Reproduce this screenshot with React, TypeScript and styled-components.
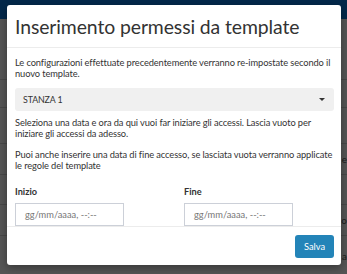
import React from 'react';
import styled, { createGlobalStyle } from 'styled-components';

const GlobalStyle = createGlobalStyle`
  html, body {
    margin: 0;
    padding: 0;
    background: #545454;
    font-family: 'Lato', 'Liberation Sans', sans-serif;
  }
`;

const Page = styled.div`
  position: relative;
  width: 347px;
  height: 274px;
  overflow: hidden;
  background: #555555;
`;

const NavBar = styled.div`
  height: 19px;
  background: #03284a;
`;

const BgRow = styled.div<{ $h: number }>`
  height: ${(p) => p.$h}px;
  border-bottom: 1px solid #484848;
  display: flex;
  justify-content: flex-end;
  align-items: center;
  font-size: 10px;
  color: #1c1c1c;
`;

const Modal = styled.div`
  position: absolute;
  left: 7px;
  top: 5px;
  width: 334px;
  height: 260px;
  background: #ffffff;
  border-radius: 3px;
  box-shadow: 0 3px 9px rgba(0, 0, 0, 0.35);
  display: flex;
  flex-direction: column;
  color: #333333;
`;

const Header = styled.div`
  height: 43px;
  box-sizing: border-box;
  padding: 0 8px;
  display: flex;
  align-items: center;
  border-bottom: 1px solid #ececec;
`;

const Title = styled.h4`
  margin: 0;
  font-size: 19.4px;
  font-weight: 400;
  color: #333333;
  letter-spacing: -0.1px;
`;

const Body = styled.div`
  flex: 1;
  padding: 9px 7px 0 8px;
  display: flex;
  flex-direction: column;
`;

const Text = styled.p<{ $mt?: number }>`
  margin: ${(p) => p.$mt ?? 0}px 0 0;
  font-size: 9.3px;
  letter-spacing: -0.1px;
  line-height: 11px;
  color: #333333;
`;

const Select = styled.div`
  margin-top: 9px;
  height: 23px;
  border-radius: 3px;
  background: #f0f0f0;
  display: flex;
  align-items: center;
  justify-content: space-between;
  padding: 0 9px 0 8px;
  font-size: 8.8px;
  letter-spacing: -0.1px;
  color: #333333;
`;

const Caret = styled.span`
  width: 0;
  height: 0;
  border-left: 3px solid transparent;
  border-right: 3px solid transparent;
  border-top: 3px solid #333333;
`;

const Fields = styled.div`
  margin-top: 15px;
  display: grid;
  grid-template-columns: 169px 1fr;
`;

const Field = styled.div`
  display: flex;
  flex-direction: column;
`;

const Label = styled.label`
  font-size: 9.2px;
  font-weight: 700;
  color: #333333;
  line-height: 11px;
`;

const DateInput = styled.div`
  margin-top: 6px;
  width: 109px;
  height: 23px;
  box-sizing: border-box;
  border: 1px solid #ccd0d8;
  display: flex;
  align-items: center;
  padding-left: 9px;
  font-size: 9.3px;
  color: #777777;
`;

const Footer = styled.div`
  height: 38px;
  border-top: 1px solid #ececec;
  display: flex;
  justify-content: flex-end;
  align-items: center;
  padding: 0 7px;
`;

const Button = styled.button`
  width: 39px;
  height: 23px;
  border: none;
  border-radius: 3px;
  background: #2384b8;
  color: #ffffff;
  font-family: inherit;
  font-size: 9.3px;
  padding: 0;
`;

export default function App() {
  return (
    <>
      <GlobalStyle />
      <Page>
        <NavBar />
        <BgRow $h={60} />
        <BgRow $h={27} />
        <BgRow $h={35} />
        <BgRow $h={30}>e</BgRow>
        <BgRow $h={29} />
        <BgRow $h={30}>o</BgRow>
        <BgRow $h={40}>a</BgRow>
        <Modal>
          <Header>
            <Title>Inserimento permessi da template</Title>
          </Header>
          <Body>
            <Text>
              Le configurazioni effettuate precedentemente verranno re-impostate secondo il nuovo template.
            </Text>
            <Select>
              <span>STANZA 1</span>
              <Caret />
            </Select>
            <Text $mt={6}>
              Seleziona una data e ora da qui vuoi far iniziare gli accessi. Lascia vuoto per iniziare gli accessi da adesso.
            </Text>
            <Text $mt={10}>
              Puoi anche inserire una data di fine accesso, se lasciata vuota verranno applicate le regole del template
            </Text>
            <Fields>
              <Field>
                <Label>Inizio</Label>
                <DateInput>gg/mm/aaaa, --:--</DateInput>
              </Field>
              <Field>
                <Label>Fine</Label>
                <DateInput>gg/mm/aaaa, --:--</DateInput>
              </Field>
            </Fields>
          </Body>
          <Footer>
            <Button>Salva</Button>
          </Footer>
        </Modal>
      </Page>
    </>
  );
}
